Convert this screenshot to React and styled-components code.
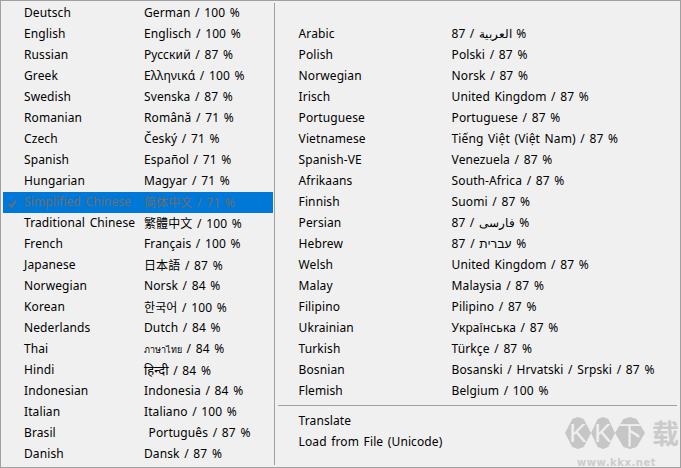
import React from "react";
import styled, { createGlobalStyle } from "styled-components";

const Global = createGlobalStyle`
  html, body { margin: 0; padding: 0; background: #f0f0f0; }
  #root { width: 681px; height: 468px; overflow: hidden; }
`;

const Menu = styled.div`
  position: relative;
  box-sizing: border-box;
  width: 681px;
  height: 468px;
  padding: 2px 3px 2px 2px;
  display: flex;
  background: #f0f0f0;
  border: 1px solid #a0a0a0;
  font-family: "Noto Sans", "Noto Sans CJK SC", sans-serif;
  font-size: 12px;
  letter-spacing: 0.1px;
  word-spacing: 1.4px;
  color: #000;
  overflow: hidden;
`;

const Column = styled.div`
  box-sizing: border-box;
  width: ${p => p.$width}px;
  display: flex;
  flex-direction: column;
`;

const LeftColumn = styled(Column)`
  border-right: 1px solid #a0a0a0;
  margin-right: 3px;
`;

const Row = styled.div`
  box-sizing: border-box;
  display: flex;
  align-items: center;
  position: relative;
  height: 21px;
  flex: none;
  white-space: pre;
  margin-right: ${p => p.$left ? 1 : 0}px;
  padding-left: 21px;
  padding-bottom: 2px;
  background: ${p => p.$active ? "#0078d7" : "transparent"};
  color: ${p => p.$active ? "#6d6d6d" : "#000"};
`;

const Label = styled.span`
  width: ${p => p.$width}px;
  flex: none;
`;

const Script = styled.span`
  font-size: ${p => p.$size}px;
  letter-spacing: 0;
`;

const Check = styled.svg`
  position: absolute;
  left: 5px;
  top: 8px;
`;

const Spacer = styled.div`
  height: 21px;
  flex: none;
`;

const Divider = styled.div`
  height: 1px;
  background: #a0a0a0;
  margin: 3px 0 5px 0;
  flex: none;
`;

const Mark = styled.div`
  position: absolute;
  left: 564px;
  top: 416px;
  width: 115px;
  display: flex;
  flex-direction: column;
  align-items: flex-start;
  gap: 10px;
  pointer-events: none;
  letter-spacing: 0;
  word-spacing: 0;
`;

const MarkLogo = styled.div`
  display: flex;
  align-items: center;
  height: 32px;
`;

const MarkBadge = styled.span`
  width: ${p => p.$width}px;
  height: 32px;
  flex: none;
  display: flex;
  align-items: center;
  justify-content: center;
  background: #c6c6c6;
  clip-path: polygon(50% 0, 72% 6%, 100% 50%, 72% 94%, 50% 100%, 28% 94%, 0 50%, 28% 6%);
  color: #f0f0f0;
  font-family: ${p => p.$han ? `"Noto Sans CJK SC"` : `"Liberation Sans"`}, sans-serif;
  font-size: ${p => p.$han ? 25 : 26}px;
  font-weight: 400;
  line-height: 32px;
`;

const MarkHan = styled.span`
  margin-left: 7px;
  font-family: "Noto Sans CJK SC", sans-serif;
  font-size: 27px;
  font-weight: 700;
  line-height: 32px;
  color: #cbcbcb;
`;

const MarkUrl = styled.div`
  margin-left: 12px;
  font-family: "DejaVu Sans", sans-serif;
  font-weight: 700;
  font-size: 10px;
  line-height: 8px;
  letter-spacing: 0.55px;
  color: #cdcdcd;
`;

const left = [
  ["Deutsch", "German / 100 %"],
  ["English", "Englisch / 100 %"],
  ["Russian", "Русский / 87 %"],
  ["Greek", "Ελληνικά / 100 %"],
  ["Swedish", "Svenska / 87 %"],
  ["Romanian", "Română / 71 %"],
  ["Czech", "Český / 71 %"],
  ["Spanish", "Español / 71 %"],
  ["Hungarian", "Magyar / 71 %"],
  ["Simplified Chinese", "简体中文 / 71 %", { active: true }],
  ["Traditional Chinese", "繁體中文 / 100 %"],
  ["French", "Français / 100 %"],
  ["Japanese", "日本語 / 87 %"],
  ["Norwegian", "Norsk / 84 %"],
  ["Korean", "한국어 / 100 %"],
  ["Nederlands", "Dutch / 84 %"],
  ["Thai", " / 84 %", { script: "ภาษาไทย", size: 9 }],
  ["Hindi", " / 84 %", { script: "हिन्दी", size: 13 }],
  ["Indonesian", "Indonesia / 84 %"],
  ["Italian", "Italiano / 100 %"],
  ["Brasil", "\u00a0Português / 87 %"],
  ["Danish", "Dansk / 87 %"],
];

const right = [
  ["Arabic", "87 / العربية %"],
  ["Polish", "Polski / 87 %"],
  ["Norwegian", "Norsk / 87 %"],
  ["Irisch", "United Kingdom / 87 %"],
  ["Portuguese", "Portuguese / 87 %"],
  ["Vietnamese", "Tiếng Việt (Việt Nam) / 87 %"],
  ["Spanish-VE", "Venezuela / 87 %"],
  ["Afrikaans", "South-Africa / 87 %"],
  ["Finnish", "Suomi / 87 %"],
  ["Persian", "87 / فارسی %"],
  ["Hebrew", "87 / עברית %"],
  ["Welsh", "United Kingdom / 87 %"],
  ["Malay", "Malaysia / 87 %"],
  ["Filipino", "Pilipino / 87 %"],
  ["Ukrainian", "Українська / 87 %"],
  ["Turkish", "Türkçe / 87 %"],
  ["Bosnian", "Bosanski / Hrvatski / Srpski / 87 %"],
  ["Flemish", "Belgium / 100 %"],
];

export default function App() {
  return (
    <Menu>
      <Global />
      <LeftColumn $width={272}>
        {left.map(([name, value, opts = {}]) => (
          <Row key={name} $left $active={opts.active}>
            {opts.active && (
              <Check width="9" height="8" viewBox="0 0 9 8" aria-hidden="true">
                <path d="M1 4 L3.4 6.6 L8 1" fill="none" stroke="#6d6d6d" strokeWidth="2" />
              </Check>
            )}
            <Label $width={120}>{name}</Label>
            <span>
              {opts.script && <Script $size={opts.size}>{opts.script}</Script>}
              {value}
            </span>
          </Row>
        ))}
      </LeftColumn>
      <Column $width={400}>
        <Spacer />
        {right.map(([name, value]) => (
          <Row key={name}>
            <Label $width={153}>{name}</Label>
            <span>{value}</span>
          </Row>
        ))}
        <Divider />
        <Row>Translate</Row>
        <Row>Load from File (Unicode)</Row>
      </Column>
      <Mark>
        <MarkLogo>
          <MarkBadge $width={26}>K</MarkBadge>
          <MarkBadge $width={24}>K</MarkBadge>
          <MarkBadge $width={30} $han>下</MarkBadge>
          <MarkHan>载</MarkHan>
        </MarkLogo>
        <MarkUrl>www.kkx.net</MarkUrl>
      </Mark>
    </Menu>
  );
}
